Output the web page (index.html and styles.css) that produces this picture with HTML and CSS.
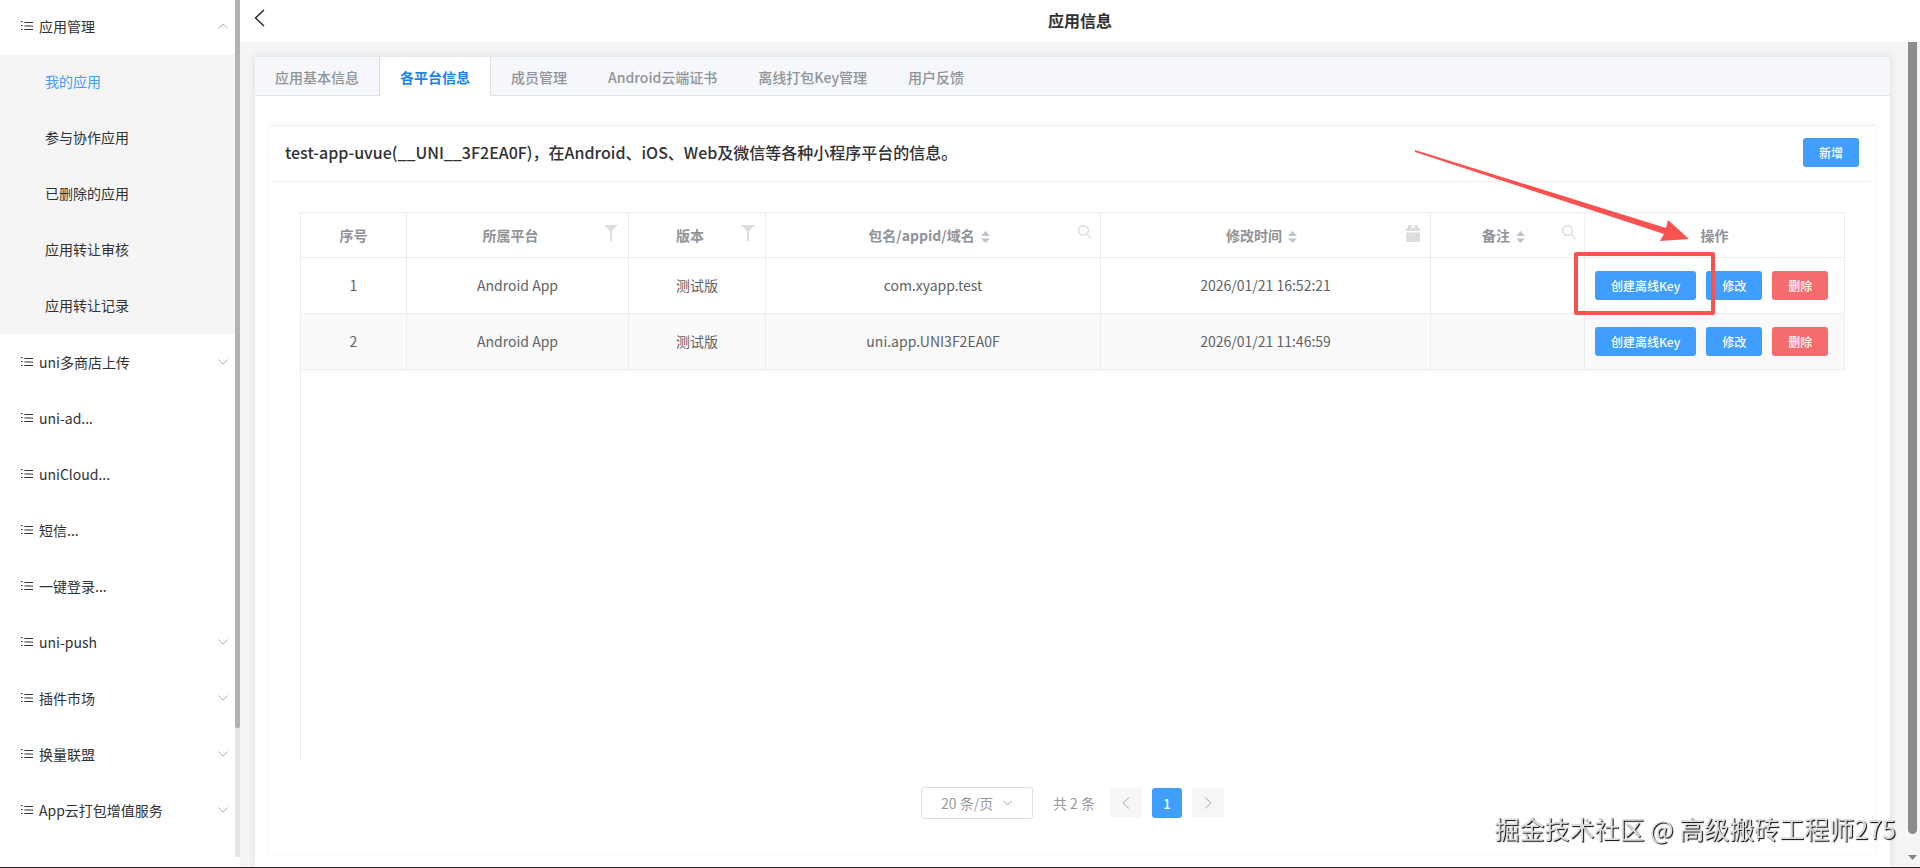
FILE: index.html
```
<!DOCTYPE html>
<html lang="zh-CN">
<head>
    <meta charset="UTF-8">
    <meta name="viewport" content="width=device-width, initial-scale=1.0">
    <title>应用信息</title>
    <link rel="stylesheet" href="styles.css">
</head>
<body>
    <!-- 公用图标 -->
    <svg class="sprite" aria-hidden="true">
        <symbol id="i-list" viewBox="0 0 12 10">
            <path d="M0 .5h1.6M0 4.5h1.6M0 8.5h1.6M3.4 1.5H12M3.4 5H12M3.4 8.5H12" fill="none" stroke="currentColor"/>
        </symbol>
        <symbol id="i-down" viewBox="0 0 10 6">
            <path d="M.4.5 5 5.1 9.6.5" fill="none" stroke="currentColor"/>
        </symbol>
        <symbol id="i-up" viewBox="0 0 10 6">
            <path d="M.4 5.5 5 .9l4.6 4.6" fill="none" stroke="currentColor"/>
        </symbol>
        <symbol id="i-filter" viewBox="0 0 14 16">
            <path d="M0 0h14L8 6v10H6V6z" fill="currentColor"/>
        </symbol>
        <symbol id="i-search" viewBox="0 0 14 14">
            <path d="M9.4 9.4 13.7 13.7" fill="none" stroke="currentColor" stroke-width="1.2"/>
            <circle cx="5.5" cy="5.5" r="4.8" fill="none" stroke="currentColor" stroke-width="1.5"/>
        </symbol>
        <symbol id="i-date" viewBox="0 0 14 17">
            <path d="M0 6V4.500Q0 3 1.500 3H2V0h3.500v3h3V0H12v3h.5Q14 3 14 4.500V6zM0 7.500h14V15.500Q14 17 12.500 17h-11Q0 17 0 15.500z" fill="currentColor"/>
        </symbol>
        <symbol id="i-sort" viewBox="0 0 9 12">
            <path d="M0 5 4.500 0 9 5zM0 7.500h9L4.500 12z" fill="currentColor"/>
        </symbol>
    </svg>

    <div class="app">
        <aside class="sidebar">
            <nav class="menu">
                <a class="menu-item" href="#"><svg class="list-icon"><use href="#i-list"/></svg>应用管理<svg class="arrow"><use href="#i-up"/></svg></a>
                <div class="submenu">
                    <a class="active" href="#">我的应用</a>
                    <a href="#">参与协作应用</a>
                    <a href="#">已删除的应用</a>
                    <a href="#">应用转让审核</a>
                    <a href="#">应用转让记录</a>
                </div>
                <a class="menu-item" href="#"><svg class="list-icon"><use href="#i-list"/></svg>uni多商店上传<svg class="arrow"><use href="#i-down"/></svg></a>
                <a class="menu-item" href="#"><svg class="list-icon"><use href="#i-list"/></svg>uni-ad...</a>
                <a class="menu-item" href="#"><svg class="list-icon"><use href="#i-list"/></svg>uniCloud...</a>
                <a class="menu-item" href="#"><svg class="list-icon"><use href="#i-list"/></svg>短信...</a>
                <a class="menu-item" href="#"><svg class="list-icon"><use href="#i-list"/></svg>一键登录...</a>
                <a class="menu-item" href="#"><svg class="list-icon"><use href="#i-list"/></svg>uni-push<svg class="arrow"><use href="#i-down"/></svg></a>
                <a class="menu-item" href="#"><svg class="list-icon"><use href="#i-list"/></svg>插件市场<svg class="arrow"><use href="#i-down"/></svg></a>
                <a class="menu-item" href="#"><svg class="list-icon"><use href="#i-list"/></svg>换量联盟<svg class="arrow"><use href="#i-down"/></svg></a>
                <a class="menu-item" href="#"><svg class="list-icon"><use href="#i-list"/></svg>App云打包增值服务<svg class="arrow"><use href="#i-down"/></svg></a>
            </nav>
            <div class="side-scroll"><div class="side-thumb"></div></div>
        </aside>

        <main class="main">
            <header class="topbar">
                <button class="back" type="button" aria-label="返回">
                    <svg width="11" height="18" viewBox="0 0 11 18"><path d="M10 1 1.500 9 10 17" fill="none" stroke="#222" stroke-width="1.4"/></svg>
                </button>
                <h1>应用信息</h1>
            </header>

            <div class="content">
                <section class="tabs-card">
                    <div class="tabs" role="tablist">
                        <button type="button" role="tab">应用基本信息</button>
                        <button type="button" role="tab" class="active" aria-selected="true">各平台信息</button>
                        <button type="button" role="tab">成员管理</button>
                        <button type="button" role="tab">Android云端证书</button>
                        <button type="button" role="tab">离线打包Key管理</button>
                        <button type="button" role="tab">用户反馈</button>
                    </div>

                    <div class="tab-body">
                        <div class="panel">
                            <div class="panel-head">
                                <h2>test-app-uvue(__UNI__3F2EA0F)，在Android、iOS、Web及微信等各种小程序平台的信息。</h2>
                                <button class="btn" type="button">新增</button>
                            </div>

                            <div class="table-wrap">
                                <table>
                                    <colgroup>
                                        <col class="c-no"><col class="c-platform"><col class="c-version"><col class="c-package"><col class="c-time"><col class="c-note"><col class="c-action">
                                    </colgroup>
                                    <thead>
                                        <tr>
                                            <th>序号</th>
                                            <th><div class="th"><span>所属平台</span><svg class="filter"><use href="#i-filter"/></svg></div></th>
                                            <th><div class="th"><span>版本</span><svg class="filter"><use href="#i-filter"/></svg></div></th>
                                            <th><div class="th"><span>包名/appid/域名<svg class="sort"><use href="#i-sort"/></svg></span><svg class="search"><use href="#i-search"/></svg></div></th>
                                            <th><div class="th"><span>修改时间<svg class="sort"><use href="#i-sort"/></svg></span><svg class="date"><use href="#i-date"/></svg></div></th>
                                            <th><div class="th"><span>备注<svg class="sort"><use href="#i-sort"/></svg></span><svg class="search"><use href="#i-search"/></svg></div></th>
                                            <th>操作</th>
                                        </tr>
                                    </thead>
                                    <tbody>
                                        <tr>
                                            <td>1</td>
                                            <td>Android App</td>
                                            <td>测试版</td>
                                            <td>com.xyapp.test</td>
                                            <td>2026/01/21 16:52:21</td>
                                            <td></td>
                                            <td>
                                                <div class="actions">
                                                    <button class="btn" type="button">创建离线Key</button>
                                                    <button class="btn" type="button">修改</button>
                                                    <button class="btn danger" type="button">删除</button>
                                                    <span class="mark-box"></span>
                                                    <svg class="mark-arrow" width="274" height="94" viewBox="0 0 274 94"><path d="M0 0 251 78l2-8 21 19-29 2 4-7L0 2z" fill="#fa5251"/></svg>
                                                </div>
                                            </td>
                                        </tr>
                                        <tr>
                                            <td>2</td>
                                            <td>Android App</td>
                                            <td>测试版</td>
                                            <td>uni.app.UNI3F2EA0F</td>
                                            <td>2026/01/21 11:46:59</td>
                                            <td></td>
                                            <td>
                                                <div class="actions">
                                                    <button class="btn" type="button">创建离线Key</button>
                                                    <button class="btn" type="button">修改</button>
                                                    <button class="btn danger" type="button">删除</button>
                                                </div>
                                            </td>
                                        </tr>
                                    </tbody>
                                </table>
                            </div>

                            <div class="pager">
                                <label class="page-size">
                                    <select aria-label="每页条数">
                                        <option>20 条/页</option>
                                        <option>50 条/页</option>
                                    </select>
                                    <svg><use href="#i-down"/></svg>
                                </label>
                                <span class="total">共 2 条</span>
                                <button class="page" type="button" aria-label="上一页"><svg width="8" height="12" viewBox="0 0 8 12"><path d="M7 .5 1 6l6 5.500" fill="none" stroke="#aaa"/></svg></button>
                                <button class="page current" type="button">1</button>
                                <button class="page" type="button" aria-label="下一页"><svg width="8" height="12" viewBox="0 0 8 12"><path d="M1 .5 7 6l-6 5.500" fill="none" stroke="#aaa"/></svg></button>
                            </div>
                        </div>
                    </div>
                </section>
                <div class="scrollbar">
                    <div class="thumb"></div>
                    <svg width="9" height="5" viewBox="0 0 9 5"><path d="M0 0h9L4.500 5z" fill="#858585"/></svg>
                </div>
            </div>
        </main>
    </div>

    <div class="watermark">掘金技术社区 @ 高级搬砖工程师275</div>
</body>
</html>
```
FILE: styles.css
```
* {
    box-sizing: border-box;
}
body {
    margin: 0;
    font-family: "Noto Sans CJK SC", "Noto Sans", sans-serif;
    font-size: 14px;
    color: #303133;
    background: #fff;
}
button, select {
    font-family: inherit;
    cursor: pointer;
}
a {
    color: inherit;
    text-decoration: none;
}
.sprite {
    display: none;
}
.app {
    display: flex;
    height: 100vh;
    border-bottom: 1px solid #2a2528;
}

/* 左侧菜单 */
.sidebar {
    display: flex;
    width: 240px;
    flex-shrink: 0;
    overflow: hidden;
}
.menu {
    flex: 1;
    margin-top: -2px;
}
.menu-item {
    display: flex;
    align-items: center;
    height: 56px;
    padding: 0 7px 0 21px;
}
.list-icon {
    width: 12px;
    height: 10px;
    margin-right: 6px;
}
.arrow {
    width: 10px;
    height: 6px;
    margin-left: auto;
    color: #aaa;
}
.submenu {
    background: #f5f5f5;
}
.submenu a {
    display: block;
    height: 56px;
    padding-left: 45px;
    line-height: 55px;
}
.submenu .active {
    color: #409eff;
}
.side-scroll {
    width: 5px;
    margin-bottom: 10px;
    background: #e5e5e5;
}
.side-thumb {
    height: 85%;
    background: #b3b3b3;
    border-radius: 0 0 2px 2px;
}

/* 顶部 */
.main {
    display: flex;
    flex: 1;
    flex-direction: column;
    min-width: 0;
}
.topbar {
    display: grid;
    grid-template-columns: 40px 1fr 40px;
    height: 42px;
}
.topbar h1 {
    margin: 0;
    font-size: 16px;
    line-height: 40px;
    text-align: center;
}
.back {
    display: flex;
    align-self: start;
    padding: 9px 14px;
    border: 0;
    background: none;
}

/* 内容区 */
.content {
    display: flex;
    flex: 1;
    min-height: 0;
    padding: 14px 0 0 15px;
    background: #f5f5f5;
}
.tabs-card {
    display: flex;
    flex: 1;
    flex-direction: column;
    min-width: 0;
    background: #fff;
    border-top: 1px solid #e4e7ed;
    box-shadow: 0 0 8px rgba(0, 0, 0, 0.1);
}
.tabs {
    display: flex;
    height: 39px;
    background: #f5f7fa;
    border-bottom: 1px solid #dfe2e8;
}
.tabs button {
    height: 39px;
    margin-left: -1px;
    padding: 0 20px;
    border: 1px solid transparent;
    border-width: 0 1px;
    background: none;
    color: #909399;
    font-size: 14px;
    font-weight: 500;
}
.tabs .active {
    color: #1683ee;
    font-weight: 700;
    background: #fff;
    border-color: #dcdfe6;
}
.tab-body {
    display: flex;
    flex: 1;
    padding: 29px 15px 14px;
}
.panel {
    display: flex;
    flex: 1;
    flex-direction: column;
    min-width: 0;
    border-top: 1px solid #ebeef5;
    box-shadow: 0 0 6px rgba(0, 0, 0, 0.06);
}
.panel-head {
    display: flex;
    justify-content: space-between;
    align-items: center;
    height: 56px;
    margin: 0 2px;
    padding: 0 14px 3px 13px;
    border-bottom: 1px solid #eee;
}
.panel-head h2 {
    margin: 0;
    font-size: 16px;
    font-weight: 500;
}
.btn {
    height: 29px;
    padding: 0 16px;
    border: 0;
    border-radius: 3px;
    background: #409eff;
    color: #fff;
    font-size: 12px;
    font-weight: 500;
}
.danger {
    background: #f56c6c;
}

/* 表格 */
.table-wrap {
    flex: 1;
    margin: 30px 30px 0;
    border-left: 1px solid #ebeef0;
}
table {
    width: 100%;
    table-layout: fixed;
    border-collapse: separate;
    border-spacing: 0;
    border-top: 1px solid #ebeef0;
}
.c-no { width: 106px; }
.c-platform { width: 222px; }
.c-version { width: 137px; }
.c-package { width: 335px; }
.c-time { width: 330px; }
.c-note { width: 154px; }
.c-action { width: 260px; }
th, td {
    padding: 0 10px;
    border: 1px solid #ebeef0;
    border-width: 0 1px 1px 0;
    text-align: center;
}
th {
    height: 45px;
    color: #909399;
}
td {
    height: 56px;
    padding-bottom: 1px;
    color: #606266;
}
tbody tr:nth-child(even) {
    background: #fafafa;
}
.th {
    display: flex;
    line-height: 20px;
}
.th span {
    flex: 1;
}
.th svg {
    width: 14px;
    color: #ddd;
}
.th .filter {
    height: 16px;
}
.th .search {
    height: 14px;
    margin: 0 -2px 0 2px;
}
.th .date {
    height: 17px;
}
.th .sort {
    width: 9px;
    height: 12px;
    margin: 0 -6px 0 6px;
    color: #c0c4cc;
    vertical-align: -2px;
}
.actions {
    position: relative;
    display: flex;
    gap: 10px;
}

/* 标注 */
.mark-box {
    position: absolute;
    top: -19px;
    left: -21px;
    width: 141px;
    height: 63px;
    border: 4px solid #fa5251;
    border-radius: 2px;
}
.mark-arrow {
    position: absolute;
    top: -121px;
    left: -180px;
}

/* 分页 */
.pager {
    display: flex;
    justify-content: center;
    align-items: center;
    gap: 10px;
    margin: 27px 0 34px;
    color: #999;
}
.page-size {
    position: relative;
}
.page-size select {
    width: 112px;
    height: 32px;
    padding: 0 19px;
    border: 1px solid #dcdfe6;
    border-radius: 3px;
    background: #fff;
    color: #999;
    font-size: 14px;
    appearance: none;
}
.page-size svg {
    position: absolute;
    top: 13px;
    right: 21px;
    width: 9px;
    height: 6px;
    pointer-events: none;
}
.total {
    margin: 0 5px 0 10px;
}
.page {
    display: flex;
    justify-content: center;
    align-items: center;
    width: 32px;
    height: 30px;
    padding: 0;
    border: 0;
    border-radius: 3px;
    background: #f6f6f6;
    font-size: 13px;
}
.current {
    width: 30px;
    background: #409eff;
    color: #fff;
    font-weight: 500;
}

/* 右侧滚动条 */
.scrollbar {
    display: flex;
    flex-direction: column;
    width: 12px;
    margin: -14px 0 0 18px;
}
.thumb {
    flex: 1;
    width: 9px;
    margin-bottom: 21px;
    background: #8b8b8b;
    border-radius: 0 0 5px 5px;
}
.scrollbar svg {
    margin-bottom: 7px;
}
.watermark {
    position: fixed;
    right: 24px;
    bottom: 22px;
    color: #ddd;
    font-size: 25px;
    line-height: 36px;
    text-shadow: 1px 1px 1px #000;
}
```
